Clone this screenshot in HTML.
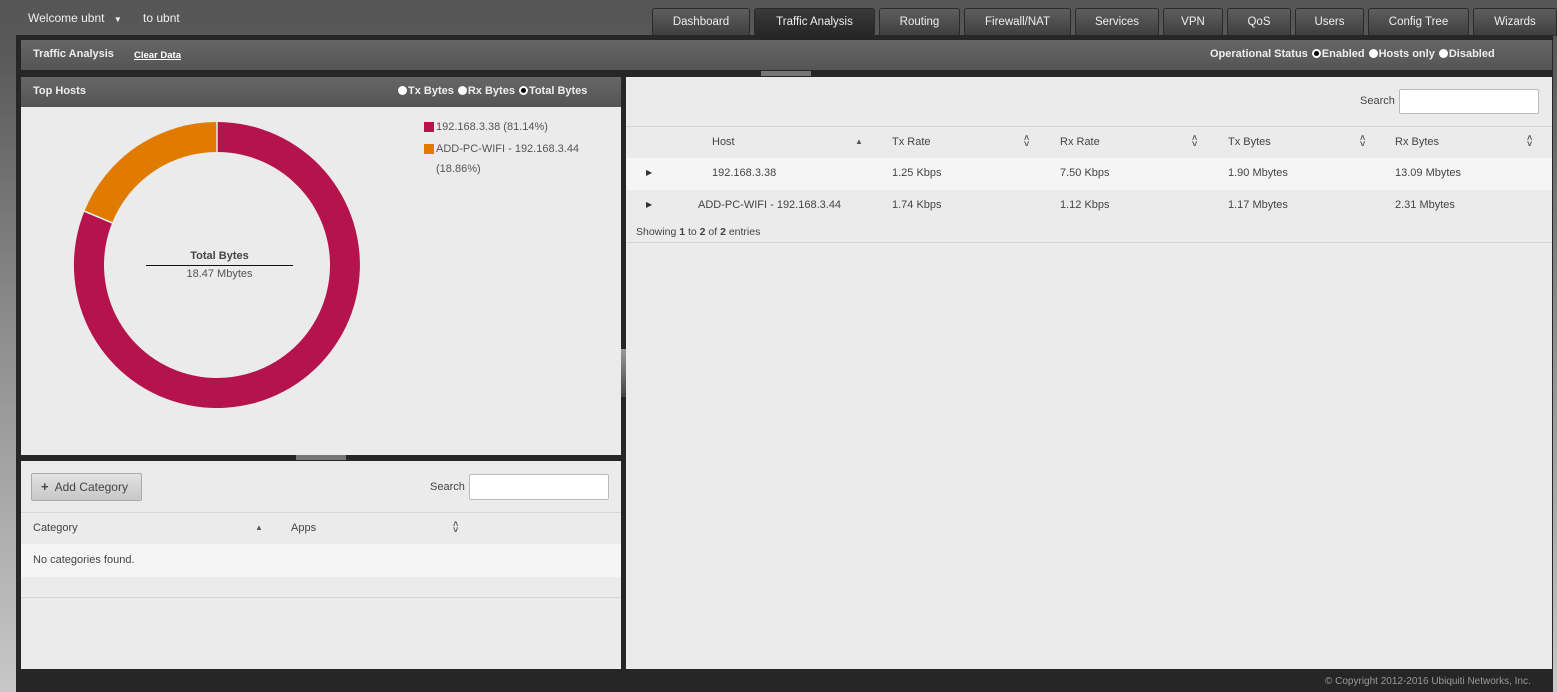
<!DOCTYPE html>
<html><head><meta charset="utf-8"><style>
*{margin:0;padding:0;box-sizing:border-box}
body{width:1557px;height:692px;overflow:hidden;position:relative;font-family:"Liberation Sans",sans-serif;font-size:11px;color:#444;background:linear-gradient(#555 0,#5a5a5a 60px,#888 300px,#c8c8c8 692px)}
.a{position:absolute;white-space:nowrap}
.tab{position:absolute;top:8px;height:28px;background:linear-gradient(#5e5e5e,#3e3e3e);border:1px solid #2a2a2a;border-bottom:none;border-radius:3px 3px 0 0;color:#eee;font-size:11.5px;text-align:center;line-height:27px}
.tab.on{background:linear-gradient(#3a3a3a,#262626)}
.bar{background:linear-gradient(#666,#555);color:#f0f0f0;font-weight:bold;font-size:11px}
.rad{display:inline-block;width:9px;height:9px;border-radius:50%;background:#fff;vertical-align:-1px;margin:0 1px 0 4px}
.rad.on{background:#000;border:2px solid #fff}
.inp{position:absolute;background:#fff;border:1px solid #bbb;border-radius:2px}
.sort{font-size:8px;color:#555}
.ud{font-size:9px;color:#555;line-height:6px;font-weight:bold}
</style></head><body>
<div class="a" style="left:28px;top:11px;color:#f0f0f0;font-size:12px">Welcome ubnt <span style="font-size:8px;margin-left:6px">▼</span></div>
<div class="a" style="left:143px;top:11px;color:#f0f0f0;font-size:12px">to ubnt</div>
<div class="tab" style="left:652px;width:98px">Dashboard</div>
<div class="tab on" style="left:754px;width:121px">Traffic Analysis</div>
<div class="tab" style="left:879px;width:81px">Routing</div>
<div class="tab" style="left:964px;width:107px">Firewall/NAT</div>
<div class="tab" style="left:1075px;width:84px">Services</div>
<div class="tab" style="left:1163px;width:60px">VPN</div>
<div class="tab" style="left:1227px;width:64px">QoS</div>
<div class="tab" style="left:1295px;width:69px">Users</div>
<div class="tab" style="left:1368px;width:101px">Config Tree</div>
<div class="tab" style="left:1473px;width:84px">Wizards</div>

<div class="a" style="left:16px;top:35px;width:1537px;height:657px;background:#262626"></div>
<div class="a bar" style="left:21px;top:40px;width:1531px;height:30px"></div>
<div class="a" style="left:33px;top:48px;color:#eee;font-weight:bold;font-size:11px">Traffic Analysis</div>
<div class="a" style="left:134px;top:50px;color:#fff;font-weight:bold;font-size:9.5px;text-decoration:underline">Clear Data</div>
<div class="a" style="left:1210px;top:48px;color:#eee;font-weight:bold;font-size:11px">Operational Status<span class="rad on"></span>Enabled<span class="rad"></span>Hosts only<span class="rad"></span>Disabled</div>
<div class="a" style="left:761px;top:71px;width:50px;height:5px;background:#777"></div>

<div class="a bar" style="left:21px;top:77px;width:600px;height:30px"></div>
<div class="a" style="left:33px;top:85px;color:#eee;font-weight:bold;font-size:11px">Top Hosts</div>
<div class="a" style="left:394px;top:85px;color:#eee;font-weight:bold;font-size:11px"><span class="rad"></span>Tx Bytes<span class="rad"></span>Rx Bytes<span class="rad on"></span>Total Bytes</div>
<div class="a" style="left:21px;top:107px;width:600px;height:348px;background:#ebebeb"></div>
<svg class="a" style="left:0;top:0" width="640" height="460">
<path d="M217 122 A143 143 0 1 1 84.5 211 L112.3 222.5 A113 113 0 1 0 217 152 Z" fill="#b5134c"/>
<path d="M84.5 211 A143 143 0 0 1 217 122 L217 152 A113 113 0 0 0 112.3 222.5 Z" fill="#e07b00"/>
<line x1="217" y1="121" x2="217" y2="153" stroke="#ebebeb" stroke-width="1.5"/>
<line x1="84" y1="211" x2="112.5" y2="223" stroke="#ebebeb" stroke-width="1.5"/>
<line x1="146" y1="265.5" x2="293" y2="265.5" stroke="#111" stroke-width="1"/>
</svg>
<div class="a" style="left:146px;top:250px;width:147px;text-align:center;font-weight:bold;color:#444">Total Bytes</div>
<div class="a" style="left:146px;top:268px;width:147px;text-align:center;color:#555">18.47 Mbytes</div>
<div class="a" style="left:424px;top:122px;width:10px;height:10px;background:#b5134c"></div>
<div class="a" style="left:436px;top:121px;color:#555">192.168.3.38 (81.14%)</div>
<div class="a" style="left:424px;top:144px;width:10px;height:10px;background:#e07b00"></div>
<div class="a" style="left:436px;top:143px;color:#555">ADD-PC-WIFI - 192.168.3.44</div>
<div class="a" style="left:436px;top:163px;color:#555">(18.86%)</div>
<div class="a" style="left:296px;top:455px;width:50px;height:5px;background:#777"></div>

<div class="a" style="left:21px;top:461px;width:600px;height:208px;background:#ebebeb"></div>
<div class="a" style="left:31px;top:473px;width:111px;height:28px;background:linear-gradient(#e2e2e2,#c8c8c8);border:1px solid #aaa;border-radius:2px;color:#444;font-size:12px;line-height:26px;padding-left:9px"><b style="font-size:13px">+</b>&nbsp; Add Category</div>
<div class="a" style="left:430px;top:481px;color:#444">Search</div>
<div class="inp" style="left:469px;top:474px;width:140px;height:26px"></div>
<div class="a" style="left:21px;top:512px;width:600px;height:1px;background:#d6d6d6"></div>
<div class="a" style="left:33px;top:522px">Category</div>
<div class="a sort" style="left:255px;top:523px">▲</div>
<div class="a" style="left:291px;top:522px">Apps</div>
<div class="a ud" style="left:453px;top:521px">˄<br>˅</div>
<div class="a" style="left:21px;top:544px;width:600px;height:33px;background:#f5f5f5"></div>
<div class="a" style="left:33px;top:554px">No categories found.</div>
<div class="a" style="left:21px;top:597px;width:600px;height:1px;background:#d6d6d6"></div>

<div class="a" style="left:621px;top:349px;width:5px;height:48px;background:linear-gradient(#999,#444)"></div>

<div class="a" style="left:626px;top:77px;width:926px;height:592px;background:#ebebeb"></div>
<div class="a" style="left:1360px;top:95px">Search</div>
<div class="inp" style="left:1399px;top:89px;width:140px;height:25px"></div>
<div class="a" style="left:626px;top:126px;width:926px;height:1px;background:#d6d6d6"></div>
<div class="a" style="left:712px;top:136px">Host</div><div class="a sort" style="left:855px;top:137px">▲</div>
<div class="a" style="left:892px;top:136px">Tx Rate</div><div class="a ud" style="left:1024px;top:135px">˄<br>˅</div>
<div class="a" style="left:1060px;top:136px">Rx Rate</div><div class="a ud" style="left:1192px;top:135px">˄<br>˅</div>
<div class="a" style="left:1228px;top:136px">Tx Bytes</div><div class="a ud" style="left:1360px;top:135px">˄<br>˅</div>
<div class="a" style="left:1395px;top:136px">Rx Bytes</div><div class="a ud" style="left:1527px;top:135px">˄<br>˅</div>
<div class="a" style="left:626px;top:158px;width:926px;height:32px;background:#f5f5f5"></div>
<div class="a" style="left:646px;top:168px;font-size:8px;color:#333">▶</div>
<div class="a" style="left:712px;top:167px">192.168.3.38</div>
<div class="a" style="left:892px;top:167px">1.25 Kbps</div>
<div class="a" style="left:1060px;top:167px">7.50 Kbps</div>
<div class="a" style="left:1228px;top:167px">1.90 Mbytes</div>
<div class="a" style="left:1395px;top:167px">13.09 Mbytes</div>
<div class="a" style="left:646px;top:200px;font-size:8px;color:#333">▶</div>
<div class="a" style="left:698px;top:199px">ADD-PC-WIFI - 192.168.3.44</div>
<div class="a" style="left:892px;top:199px">1.74 Kbps</div>
<div class="a" style="left:1060px;top:199px">1.12 Kbps</div>
<div class="a" style="left:1228px;top:199px">1.17 Mbytes</div>
<div class="a" style="left:1395px;top:199px">2.31 Mbytes</div>
<div class="a" style="left:636px;top:226px;font-size:10.5px;color:#444">Showing <b>1</b> to <b>2</b> of <b>2</b> entries</div>
<div class="a" style="left:626px;top:242px;width:926px;height:1px;background:#d6d6d6"></div>

<div class="a" style="left:1325px;top:676px;color:#999;font-size:10px">© Copyright 2012-2016 Ubiquiti Networks, Inc.</div>
</body></html>
